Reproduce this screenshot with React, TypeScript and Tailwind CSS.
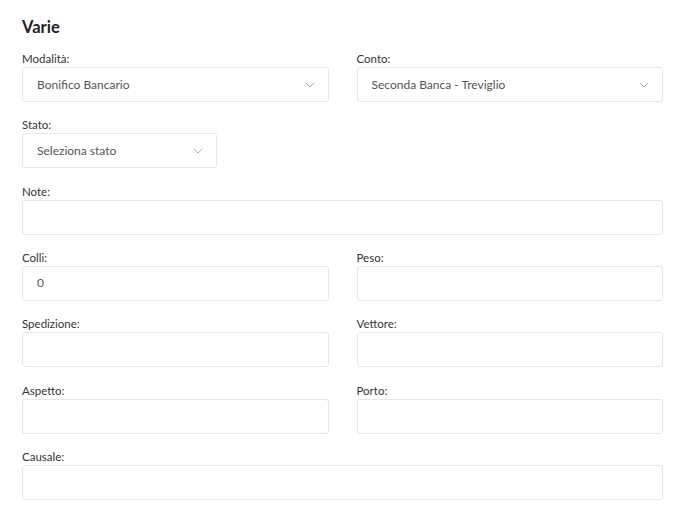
import React from 'react';

const Chevron = () => (
  <svg width="10" height="6" viewBox="0 0 10 6" fill="none" className="shrink-0">
    <path d="M0.7 0.7 L5 5 L9.3 0.7" stroke="#a8a8a8" strokeWidth="1" />
  </svg>
);

const Field = ({ label, children, className = '' }: { label: string; children?: React.ReactNode; className?: string }) => (
  <div className={`mb-[15.33px] ${className}`}>
    <div className="text-[11.5px] leading-4 text-[#333]">{label}</div>
    <div className="h-[35px] rounded-[3px] border border-[#e6e6e6] bg-white flex items-center pl-[14px] pr-[13px] text-[12px] text-[#555]">
      {children}
    </div>
  </div>
);

const Select = ({ label, value, className = '' }: { label: string; value: string; className?: string }) => (
  <Field label={label} className={className}>
    <span className="flex-1">{value}</span>
    <Chevron />
  </Field>
);

export default function App() {
  return (
    <div className="min-h-screen bg-white pl-[22px] pr-[26px] pt-[15px]" style={{ fontFamily: 'Lato, "Noto Sans", sans-serif' }}>
      <h2 className="text-[16.5px] leading-6 font-bold text-[#222] mb-3">Varie</h2>

      <div className="grid grid-cols-2 gap-x-[28px]">
        <Select label="Modalità:" value="Bonifico Bancario" />
        <Select label="Conto:" value="Seconda Banca - Treviglio" />
      </div>

      <Select label="Stato:" value="Seleziona stato" className="w-[195px]" />

      <Field label="Note:" />

      <div className="grid grid-cols-2 gap-x-[28px]">
        <Field label="Colli:">0</Field>
        <Field label="Peso:" />
        <Field label="Spedizione:" />
        <Field label="Vettore:" />
        <Field label="Aspetto:" />
        <Field label="Porto:" />
      </div>

      <Field label="Causale:" />
    </div>
  );
}
